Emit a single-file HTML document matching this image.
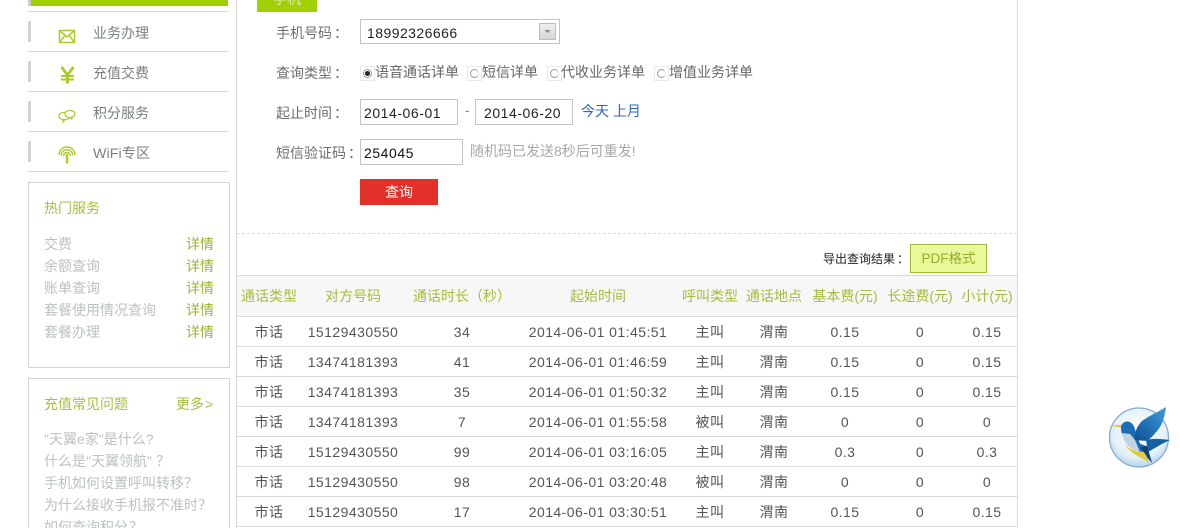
<!DOCTYPE html>
<html><head><meta charset="utf-8"><style>
html,body{margin:0;padding:0;background:#fff}
#p{position:relative;width:1180px;height:528px;overflow:hidden;background:#fff;font-family:"Liberation Sans","Noto Sans CJK SC",sans-serif;font-size:14px;color:#666}
#p div,#p svg,#p span.a{position:absolute}
.t{white-space:nowrap;line-height:20px;height:20px}
.c{transform:translateX(-50%);text-align:center}
.l{background:#dcdcdc;height:1px}
.b{background:#d2d2d2;width:3px;height:21px;left:28px}
.n{left:93px;color:#7a807e}
.g{color:#bcc2c0;left:44px}
.x{color:#9ab52f;left:186px}
.h{color:#a3bd3c;font-size:14px}
.d{color:#555;letter-spacing:.45px}
.in{border:1px solid #c4c4c4;box-sizing:border-box;background:#fff;color:#222;letter-spacing:.55px}
.f{left:276px;color:#6e6e6e}
.q{position:relative;left:2px}
.r{width:15px;height:15px;border:1px solid #eaeaea;box-sizing:border-box;background:#fff;top:66px}
.r i{position:absolute;left:2px;top:2px;width:9px;height:9px;box-sizing:border-box;border:1.500px solid;border-color:#999 #e4e4e4 #999 #999;border-radius:50%;display:block}
.r b{position:absolute;left:4px;top:4px;width:5px;height:5px;background:#222;border-radius:50%;display:block}
</style></head><body><div id="p">
<div style="left:28px;top:0;width:200px;height:6px;background:#a2d000"></div>
<div style="left:28px;top:0;width:3px;height:6px;background:#c9c9c9"></div>
<div class="l" style="left:28px;top:11px;width:200px"></div>
<div class="l" style="left:28px;top:51px;width:200px"></div>
<div class="l" style="left:28px;top:91px;width:200px"></div>
<div class="l" style="left:28px;top:131px;width:200px"></div>
<div class="l" style="left:28px;top:171px;width:200px"></div>
<div class="b" style="top:21px"></div><div class="b" style="top:61px"></div><div class="b" style="top:101px"></div><div class="b" style="top:141px"></div>
<svg style="left:58px;top:29px" width="18" height="15" viewBox="0 0 18 15" fill="none" stroke="#a9cc2c" stroke-width="1.500"><rect x="1.500" y="1.500" width="15" height="12"/><path d="M1.500 1.500l7.500 6.500 7.500-6.500M1.500 13.500l5-6.500M16.500 13.500l-5-6.500"/></svg>
<svg style="left:60px;top:66px" width="15" height="18" viewBox="0 0 15 18" fill="none" stroke="#a9cc2c" stroke-width="2.800"><path d="M1.500 1l6 8 6-8M7.500 8v9.500"/><path d="M1 10h13M1 13.500h13" stroke-width="2"/></svg>
<svg style="left:58px;top:108px" width="18" height="15" viewBox="0 0 18 15" fill="none" stroke="#a9cc2c" stroke-width="1.200"><ellipse cx="6.500" cy="8" rx="5.500" ry="3.700"/><ellipse cx="12" cy="6" rx="5" ry="3.500" fill="#fff"/><path d="M5 11.500l0 2.500 2-2.500M13 9.500l1 2 0-2.500"/></svg>
<svg style="left:58px;top:146px" width="18" height="18" viewBox="0 0 18 18" fill="none" stroke="#a9cc2c" stroke-width="1.400"><path d="M1 9a8 8 0 0 1 16 0M3.200 9.500a5.800 5.800 0 0 1 11.600 0M5.500 10a3.500 3.500 0 0 1 7 0"/><path d="M9 8v9.500" stroke-width="2.400"/></svg>
<div class="t n" style="top:23px">业务办理</div>
<div class="t n" style="top:63px">充值交费</div>
<div class="t n" style="top:103px">积分服务</div>
<div class="t n" style="top:144px;letter-spacing:.1px;font-size:14.200px">WiFi专区</div>

<div style="left:28px;top:182px;width:202px;height:186px;box-sizing:border-box;border:1px solid #d4d4d4"></div>
<div class="t" style="left:44px;top:198px;color:#a6c13c;font-size:14px">热门服务</div>
<div class="t g" style="top:234px">交费</div><div class="t x" style="top:234px">详情</div>
<div class="t g" style="top:256px">余额查询</div><div class="t x" style="top:256px">详情</div>
<div class="t g" style="top:278px">账单查询</div><div class="t x" style="top:278px">详情</div>
<div class="t g" style="top:300px">套餐使用情况查询</div><div class="t x" style="top:300px">详情</div>
<div class="t g" style="top:322px">套餐办理</div><div class="t x" style="top:322px">详情</div>

<div style="left:28px;top:378px;width:202px;height:170px;box-sizing:border-box;border:1px solid #d4d4d4"></div>
<div class="t" style="left:44px;top:394px;color:#a6c13c;font-size:14px">充值常见问题</div>
<div class="t" style="left:176px;top:394px;color:#a6c13c">更多<span style="margin-left:1px">&gt;</span></div>
<div class="t g" style="top:429px">"天翼e家"是什么?</div>
<div class="t g" style="top:451px">什么是"天翼领航"<span class="q" style="left:4px">？</span></div>
<div class="t g" style="top:473px">手机如何设置呼叫转移<span class="q" style="left:0">？</span></div>
<div class="t g" style="top:495px">为什么接收手机报不准时<span class="q" style="left:0">？</span></div>
<div class="t g" style="top:517px">如何查询积分<span class="q" style="left:1px">？</span></div>

<div style="left:236px;top:0;width:1px;height:528px;background:#d8d8d8"></div>
<div style="left:1017px;top:0;width:1px;height:528px;background:#d8d8d8"></div>

<div style="left:257px;top:0;width:60px;height:12px;background:#a2d000;overflow:hidden"><span class="a" style="left:16px;top:-11px;color:#dff0a0;font-size:14px;line-height:20px;white-space:nowrap">手机</span></div>

<div class="t f" style="top:23px">手机号码<span class="q">：</span></div>
<div class="t in" style="left:360px;top:19px;width:200px;height:25px;line-height:27px;padding-left:6px;letter-spacing:.45px">18992326666</div>
<svg style="left:539px;top:23px" width="17" height="17" viewBox="0 0 17 17"><defs><linearGradient id="dd" x1="0" y1="0" x2="0" y2="1"><stop offset="0" stop-color="#f0f0f0"/><stop offset="1" stop-color="#d4d4d4"/></linearGradient></defs><rect x=".5" y=".5" width="16" height="16" fill="url(#dd)" stroke="#bdbdbd"/><path d="M5.500 7h6l-3 3z" fill="#8a8a8a"/></svg>

<div class="t f" style="top:63px">查询类型<span class="q">：</span></div>
<div class="r" style="left:360px"><i style="border-color:#999"></i><b></b></div>
<div class="t" style="left:375px;top:62px">语音通话详单</div>
<div class="r" style="left:467px"><i></i></div>
<div class="t" style="left:482px;top:62px">短信详单</div>
<div class="r" style="left:547px"><i></i></div>
<div class="t" style="left:561px;top:62px">代收业务详单</div>
<div class="r" style="left:654px"><i></i></div>
<div class="t" style="left:669px;top:62px">增值业务详单</div>

<div class="t f" style="top:103px">起止时间<span class="q">：</span></div>
<div class="t in" style="left:360px;top:99px;width:98px;height:26px;line-height:26px;padding-left:3px">2014-06-01</div>
<div class="t" style="left:465px;top:100px;color:#888">-</div>
<div class="t in" style="left:475px;top:99px;width:98px;height:26px;line-height:26px;padding-left:8px">2014-06-20</div>
<div class="t" style="left:581px;top:101px;color:#2b67c4">今天 上月</div>

<div class="t f" style="top:143px">短信验证码<span class="q">：</span></div>
<div class="t in" style="left:360px;top:139px;width:103px;height:26px;line-height:26px;padding-left:3px;color:#111">254045</div>
<div class="t" style="left:470px;top:141px;color:#a8a8a8">随机码已发送8秒后可重发!</div>
<div class="t" style="left:360px;top:179px;width:78px;height:26px;line-height:27px;background:#e2302a;color:#fff;text-align:center">查询</div>

<div style="left:237px;top:233px;width:780px;border-top:1px dashed #dcdcdc"></div>
<div class="t" style="left:823px;top:249px;font-size:12px;color:#222">导出查询结果<span class="q">：</span></div>
<div class="t" style="left:910px;top:244px;width:77px;height:29px;box-sizing:border-box;border:1px solid #a0bc36;background:#e9f99a;color:#93ad2a;line-height:27px;text-align:center;font-size:13.500px">PDF格式</div>

<div style="left:237px;top:275px;width:780px;height:42px;box-sizing:border-box;background:#f7f7f7;border-top:1px solid #d8d8d8;border-bottom:1px solid #d8d8d8"></div>
<div class="t c h" style="left:269px;top:286px">通话类型</div>
<div class="t c h" style="left:353px;top:286px">对方号码</div>
<div class="t c h" style="left:462px;top:286px">通话时长（秒）</div>
<div class="t c h" style="left:598px;top:286px">起始时间</div>
<div class="t c h" style="left:710px;top:286px">呼叫类型</div>
<div class="t c h" style="left:774px;top:286px">通话地点</div>
<div class="t c h" style="left:845px;top:286px">基本费(元)</div>
<div class="t c h" style="left:920px;top:286px">长途费(元)</div>
<div class="t c h" style="left:987px;top:286px">小计(元)</div>

<div class="l" style="left:237px;top:346px;width:780px"></div>
<div class="l" style="left:237px;top:376px;width:780px"></div>
<div class="l" style="left:237px;top:406px;width:780px"></div>
<div class="l" style="left:237px;top:436px;width:780px"></div>
<div class="l" style="left:237px;top:466px;width:780px"></div>
<div class="l" style="left:237px;top:496px;width:780px"></div>
<div class="l" style="left:237px;top:526px;width:780px"></div>

<div class="t c d" style="left:269px;top:322px">市话</div><div class="t c d" style="left:353px;top:322px">15129430550</div><div class="t c d" style="left:462px;top:322px">34</div><div class="t c d" style="left:598px;top:322px">2014-06-01 01:45:51</div><div class="t c d" style="left:710px;top:322px">主叫</div><div class="t c d" style="left:774px;top:322px">渭南</div><div class="t c d" style="left:845px;top:322px">0.15</div><div class="t c d" style="left:920px;top:322px">0</div><div class="t c d" style="left:987px;top:322px">0.15</div>
<div class="t c d" style="left:269px;top:352px">市话</div><div class="t c d" style="left:353px;top:352px">13474181393</div><div class="t c d" style="left:462px;top:352px">41</div><div class="t c d" style="left:598px;top:352px">2014-06-01 01:46:59</div><div class="t c d" style="left:710px;top:352px">主叫</div><div class="t c d" style="left:774px;top:352px">渭南</div><div class="t c d" style="left:845px;top:352px">0.15</div><div class="t c d" style="left:920px;top:352px">0</div><div class="t c d" style="left:987px;top:352px">0.15</div>
<div class="t c d" style="left:269px;top:382px">市话</div><div class="t c d" style="left:353px;top:382px">13474181393</div><div class="t c d" style="left:462px;top:382px">35</div><div class="t c d" style="left:598px;top:382px">2014-06-01 01:50:32</div><div class="t c d" style="left:710px;top:382px">主叫</div><div class="t c d" style="left:774px;top:382px">渭南</div><div class="t c d" style="left:845px;top:382px">0.15</div><div class="t c d" style="left:920px;top:382px">0</div><div class="t c d" style="left:987px;top:382px">0.15</div>
<div class="t c d" style="left:269px;top:412px">市话</div><div class="t c d" style="left:353px;top:412px">13474181393</div><div class="t c d" style="left:462px;top:412px">7</div><div class="t c d" style="left:598px;top:412px">2014-06-01 01:55:58</div><div class="t c d" style="left:710px;top:412px">被叫</div><div class="t c d" style="left:774px;top:412px">渭南</div><div class="t c d" style="left:845px;top:412px">0</div><div class="t c d" style="left:920px;top:412px">0</div><div class="t c d" style="left:987px;top:412px">0</div>
<div class="t c d" style="left:269px;top:442px">市话</div><div class="t c d" style="left:353px;top:442px">15129430550</div><div class="t c d" style="left:462px;top:442px">99</div><div class="t c d" style="left:598px;top:442px">2014-06-01 03:16:05</div><div class="t c d" style="left:710px;top:442px">主叫</div><div class="t c d" style="left:774px;top:442px">渭南</div><div class="t c d" style="left:845px;top:442px">0.3</div><div class="t c d" style="left:920px;top:442px">0</div><div class="t c d" style="left:987px;top:442px">0.3</div>
<div class="t c d" style="left:269px;top:472px">市话</div><div class="t c d" style="left:353px;top:472px">15129430550</div><div class="t c d" style="left:462px;top:472px">98</div><div class="t c d" style="left:598px;top:472px">2014-06-01 03:20:48</div><div class="t c d" style="left:710px;top:472px">被叫</div><div class="t c d" style="left:774px;top:472px">渭南</div><div class="t c d" style="left:845px;top:472px">0</div><div class="t c d" style="left:920px;top:472px">0</div><div class="t c d" style="left:987px;top:472px">0</div>
<div class="t c d" style="left:269px;top:502px">市话</div><div class="t c d" style="left:353px;top:502px">15129430550</div><div class="t c d" style="left:462px;top:502px">17</div><div class="t c d" style="left:598px;top:502px">2014-06-01 03:30:51</div><div class="t c d" style="left:710px;top:502px">主叫</div><div class="t c d" style="left:774px;top:502px">渭南</div><div class="t c d" style="left:845px;top:502px">0.15</div><div class="t c d" style="left:920px;top:502px">0</div><div class="t c d" style="left:987px;top:502px">0.15</div>

<svg style="left:1105px;top:404px" width="70" height="66" viewBox="0 0 70 66">
<defs><radialGradient id="bg" cx=".5" cy=".4" r=".6"><stop offset="0" stop-color="#fff"/><stop offset=".75" stop-color="#e4f0f9"/><stop offset="1" stop-color="#b5d2e8"/></radialGradient>
<linearGradient id="w" x1="0" y1="1" x2="1" y2="0"><stop offset="0" stop-color="#0c4f92"/><stop offset="1" stop-color="#3d9fe0"/></linearGradient></defs>
<circle cx="34" cy="33.500" r="29.500" fill="url(#bg)" stroke="#7fa9cf" stroke-width="1.200"/>
<path d="M3 21.500l14-.5 0 2.500z" fill="#e3bd3e"/>
<path d="M16 24c0-4 3-6.500 6-6.500 4 0 7 3 8 8l5 14 7 3 5 16-12-11-14-11c-4-4-5-9-5-13z" fill="#1b6db5"/>
<path d="M17 29c1 6 3 10 6 13 4 3 8 5 12 6l-5-12-5-6z" fill="#c4d3e0"/>
<path d="M20 41c5 7 12 11 20 15l4 3-4-11-6-.5c-5-.5-10-3-14-6.500z" fill="#e2c93f"/>
<path d="M30 36C29 28 33 21 37 17 44 12 53 8 61 3c-1 8-3 15-6 20-4 6-9 11-13 14z" fill="url(#w)"/>
<path d="M41 36c8-2 16-1 24 0-7 3-15 8-22 12z" fill="#14639f"/>
<path d="M35 43l12 16-5-17z" fill="#0d3f70"/>
</svg>
</div></body></html>
